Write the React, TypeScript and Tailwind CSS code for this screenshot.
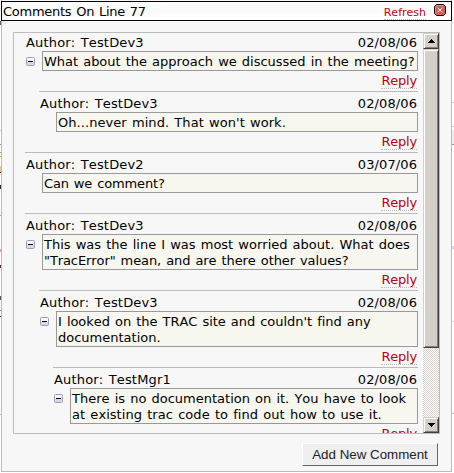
type Line = { text: string; tracking: string };

type Comment = {
  author: string;
  date: string;
  lines: Line[];
  indent: string;
  toggle: boolean;
};

const comments: Comment[] = [
  {
    author: 'TestDev3',
    date: '02/08/06',
    lines: [{ text: 'What about the approach we discussed in the meeting?', tracking: 'tracking-[-0.02px]' }],
    indent: 'ml-[11px]',
    toggle: true,
  },
  {
    author: 'TestDev3',
    date: '02/08/06',
    lines: [{ text: "Oh...never mind. That won't work.", tracking: 'tracking-[0.06px]' }],
    indent: 'ml-[25px]',
    toggle: false,
  },
  {
    author: 'TestDev2',
    date: '03/07/06',
    lines: [{ text: 'Can we comment?', tracking: 'tracking-[-0.14px]' }],
    indent: 'ml-[11px]',
    toggle: false,
  },
  {
    author: 'TestDev3',
    date: '02/08/06',
    lines: [
      { text: 'This was the line I was most worried about. What does', tracking: 'tracking-normal' },
      { text: '"TracError" mean, and are there other values?', tracking: 'tracking-[-0.09px]' },
    ],
    indent: 'ml-[11px]',
    toggle: true,
  },
  {
    author: 'TestDev3',
    date: '02/08/06',
    lines: [
      { text: "I looked on the TRAC site and couldn't find any", tracking: 'tracking-[-0.04px]' },
      { text: 'documentation.', tracking: 'tracking-normal' },
    ],
    indent: 'ml-[25px]',
    toggle: true,
  },
  {
    author: 'TestMgr1',
    date: '02/08/06',
    lines: [
      { text: 'There is no documentation on it. You have to look', tracking: 'tracking-normal' },
      { text: 'at existing trac code to find out how to use it.', tracking: 'tracking-[0.05px]' },
    ],
    indent: 'ml-[39px]',
    toggle: true,
  },
];

function Toggle() {
  return (
    <svg width="9" height="9" viewBox="0 0 9 9">
      <rect x="0.5" y="0.5" width="8" height="8" rx="1" fill="#f6f7fa" stroke="#9a9fb0" />
      <rect x="1" y="5" width="7" height="3" fill="#d5d9e2" />
      <rect x="2" y="4" width="5" height="1" fill="#000" />
    </svg>
  );
}

function CommentItem({ comment, first }: { comment: Comment; first: boolean }) {
  return (
    <div className={comment.indent}>
      <div className={first ? 'h-0' : 'h-px bg-[#bbb]'} />
      <div className={`flex justify-between pl-px pr-px leading-4 ${first ? 'h-[18px] pt-[2px]' : 'h-5 pt-[4px]'}`}>
        <span className="tracking-[0.17px]">Author: {comment.author}</span>
        <span className="tracking-[0.1px]">{comment.date}</span>
      </div>
      <div className="flex">
        <div className="w-[17px] shrink-0 pt-[6px] pl-px">{comment.toggle && <Toggle />}</div>
        <div className="flex-1 border border-[#999] bg-[#f7f7ef] pt-[2px] pl-px leading-4 whitespace-nowrap">
          {comment.lines.map((line) => (
            <div key={line.text} className={line.tracking}>
              {line.text}
            </div>
          ))}
        </div>
      </div>
      <div className="flex h-5 justify-end pt-[2px] leading-4">
        <span className="mr-px h-4 border-b border-dotted border-[#bbb] tracking-[-0.2px] text-[#b80018]">Reply</span>
      </div>
    </div>
  );
}

function ScrollButton({ down }: { down?: boolean }) {
  return (
    <div className="flex h-4 w-4 shrink-0 items-center justify-center border border-t-[#d4d0c8] border-r-[#404040] border-b-[#404040] border-l-[#d4d0c8] bg-[#d4d0c8] shadow-[inset_1px_1px_#fff,inset_-1px_-1px_#808080]">
      <svg width="7" height="4" viewBox="0 0 7 4" shapeRendering="crispEdges">
        <path d={down ? 'M0 0h7v1H0zM1 1h5v1H1zM2 2h3v1H2zM3 3h1v1H3z' : 'M3 0h1v1H3zM2 1h3v1H2zM1 2h5v1H1zM0 3h7v1H0z'} />
      </svg>
    </div>
  );
}

function CloseIcon() {
  return (
    <svg width="12" height="12" viewBox="0 0 12 12">
      <path d="M2.5 .5h7l2 2v7l-2 2h-7l-2-2v-7z" fill="#d0605c" stroke="#250000" />
      <path d="M1.5 9V3L3 1.5h6" fill="none" stroke="#e08a86" />
      <path d="m3.7 3.7 4.6 4.6m0-4.6-4.6 4.6" stroke="#ffe9e6" />
    </svg>
  );
}

export default function App() {
  return (
    <div className="flex h-[473px] w-[454px] bg-white font-['DejaVu_Sans',Verdana,sans-serif] text-[13px] text-black [font-kerning:none] [word-spacing:1px]">
      <div className="flex w-px shrink-0 flex-col">
        <div className="mt-[21px] h-[2px] bg-[#2a65a8]" />
        <div className="h-[2px] bg-[#b63a20]" />
        <div className="mt-[105px] h-px bg-[#ccc]" />
        <div className="mt-[13px] h-px bg-[#999]" />
        <div className="mt-[7px] h-px bg-[#e0a040]" />
        <div className="mt-[3px] h-px bg-[#e0a040]" />
        <div className="mt-[9px] h-[6px] bg-[#e9c49a]" />
        <div className="h-px bg-[#800000]" />
        <div className="mt-[12px] h-[4px] bg-[#38204a]" />
        <div className="mt-[26px] h-px bg-[#e0a040]" />
        <div className="mt-[33px] h-[3px] bg-[#d9a39c]" />
        <div className="mt-[13px] h-[3px] bg-[#702030]" />
        <div className="mt-[28px] h-[4px] bg-[#55506a]" />
        <div className="mt-[10px] h-px bg-[#d08030]" />
        <div className="mt-[5px] h-px bg-[#602030]" />
        <div className="mt-[97px] h-px bg-[#bbb]" />
      </div>
      <div className="flex h-[472px] w-[451px] shrink-0 flex-col border border-t-0 border-[#bbb] bg-[#f7f7f7]">
        <div className="-mx-px mt-px flex h-5 shrink-0 justify-between border border-black bg-gradient-to-b from-white via-[#fafafa] to-white pl-px leading-[18px]">
          <span className="pt-px tracking-[-0.27px]">Comments On Line 77</span>
          <div className="flex gap-[8px] pr-[5px]">
            <span className="mt-[3px] h-[15px] border-b border-dotted border-[#bbb] text-[11px] leading-[15px] text-[#c00020]">Refresh</span>
            <div className="pt-[2px]">
              <CloseIcon />
            </div>
          </div>
        </div>
        <div className="mt-[11px] ml-[11px] flex h-[402px] w-[427px] shrink-0 overflow-hidden border border-[#bbb]">
          <div className="h-[400px] w-[404px] shrink-0 overflow-hidden">
            {comments.map((comment, i) => (
              <CommentItem key={i} comment={comment} first={i === 0} />
            ))}
          </div>
          <div className="ml-[5px] flex h-[400px] w-4 shrink-0 flex-col bg-[#eae8e4] bg-[repeating-conic-gradient(#fff_0_25%,#d4d0c8_0_50%)] bg-[length:2px_2px]">
            <ScrollButton />
            <div className="h-[299px] border border-t-[#d4d0c8] border-r-[#404040] border-b-[#404040] border-l-[#d4d0c8] bg-[#d4d0c8] shadow-[inset_1px_1px_#fff,inset_-1px_-1px_#808080]" />
            <div className="flex-1" />
            <ScrollButton down />
          </div>
        </div>
        <div className="mt-[9px] ml-[300px] flex h-[23px] w-[136px] shrink-0 items-center justify-center border border-t-white border-r-[#666] border-b-[#666] border-l-white bg-[#efefef] font-['Liberation_Sans',Arial,sans-serif] text-[13.33px] leading-none text-[#222] [word-spacing:0px]">
          Add New Comment
        </div>
      </div>
      <div className="flex w-[2px] shrink-0 flex-col">
        <div className="mt-[102px] h-px bg-[#ccc]" />
        <div className="mt-[23px] h-px bg-[#ccc]" />
        <div className="mt-[3px] h-[14px] bg-[#eee]" />
        <div className="h-px bg-[#999]" />
        <div className="mt-[101px] h-[3px] bg-[#d5d5ee]" />
        <div className="mt-[72px] h-px bg-[#ddd]" />
        <div className="mt-[91px] h-px bg-[#bbb]" />
      </div>
    </div>
  );
}
